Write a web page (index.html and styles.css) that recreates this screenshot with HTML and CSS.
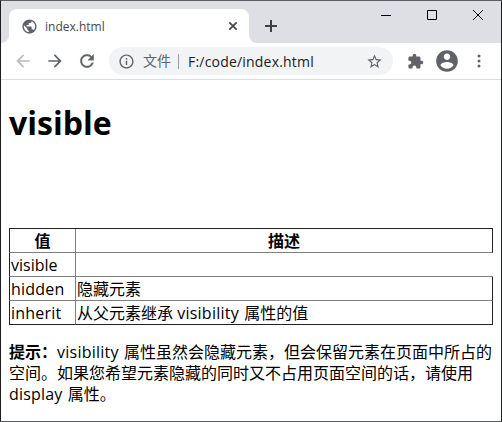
FILE: index.html
```html
<!DOCTYPE html>
<html lang="zh-CN">
<head>
<meta charset="utf-8">
<title>index.html</title>
<link rel="stylesheet" href="styles.css">
</head>
<body>
<div class="window">
  <header class="tabstrip">
    <div class="strip-left"></div>
    <div class="tab">
      <svg class="globe" viewBox="0 0 24 24"><path d="M12 2C6.480 2 2 6.480 2 12s4.480 10 10 10 10-4.480 10-10S17.520 2 12 2zm-1 17.930c-3.950-.490-7-3.850-7-7.930 0-.620.080-1.210.210-1.790L9 15v1c0 1.100.900 2 2 2v1.930zm6.900-2.540c-.260-.810-1-1.390-1.900-1.390h-1v-3c0-.550-.450-1-1-1H8v-2h2c.550 0 1-.450 1-1V7h2c1.100 0 2-.900 2-2v-.410c2.930 1.190 5 4.060 5 7.410 0 2.080-.800 3.970-2.100 5.390z"/></svg>
      <span class="tab-title">index.html</span>
      <svg class="tab-close" viewBox="0 0 10 10"><path d="M1.300 1.300l7.400 7.400M8.700 1.300L1.300 8.700"/></svg>
    </div>
    <div class="strip-right">
      <svg class="plus" viewBox="0 0 12 12"><path d="M6 0v12M0 6h12"/></svg>
      <svg class="control" viewBox="0 0 10 10"><path d="M0 5.500h10"/></svg>
      <svg class="control" viewBox="0 0 10 10"><path d="M.5.500h9v9h-9z"/></svg>
      <svg class="control" viewBox="0 0 10 10"><path d="M0 0l10 10M10 0L0 10"/></svg>
    </div>
  </header>
  <nav class="toolbar">
    <svg class="nav back" viewBox="0 0 24 24"><path d="M20 11H7.830l5.590-5.590L12 4l-8 8 8 8 1.410-1.410L7.830 13H20v-2z"/></svg>
    <svg class="nav" viewBox="0 0 24 24"><path d="M12 4l-1.410 1.410L16.170 11H4v2h12.170l-5.580 5.590L12 20l8-8z"/></svg>
    <svg class="nav reload" viewBox="0 0 24 24"><path d="M17.650 6.350C16.200 4.900 14.210 4 12 4c-4.420 0-7.990 3.580-7.990 8s3.570 8 7.990 8c3.730 0 6.840-2.550 7.730-6h-2.080c-.820 2.330-3.040 4-5.650 4-3.310 0-6-2.690-6-6s2.690-6 6-6c1.660 0 3.140.690 4.220 1.780L13 11h7V4l-2.350 2.350z"/></svg>
    <div class="omnibox">
      <svg class="info" viewBox="0 0 24 24"><path d="M11 7h2v2h-2zm0 4h2v6h-2zm1-9C6.480 2 2 6.480 2 12s4.480 10 10 10 10-4.480 10-10S17.520 2 12 2zm0 18c-4.410 0-8-3.590-8-8s3.590-8 8-8 8 3.590 8 8-3.590 8-8 8z"/></svg>
      <span class="scheme">文件</span>
      <span class="url">F:/code/index.html</span>
      <svg class="star" viewBox="0 0 24 24"><path d="M22 9.240l-7.190-.620L12 2 9.190 8.630 2 9.240l5.460 4.730L5.820 21 12 17.270 18.180 21l-1.630-7.030L22 9.240zM12 15.400l-3.760 2.270 1-4.280-3.320-2.880 4.380-.380L12 6.100l1.710 4.040 4.380.380-3.320 2.880 1 4.280L12 15.400z"/></svg>
    </div>
    <svg class="puzzle" viewBox="0 0 24 24"><path d="M20.500 11H19V7c0-1.100-.900-2-2-2h-4V3.500C13 2.120 11.880 1 10.500 1S8 2.120 8 3.500V5H4c-1.100 0-1.990.900-1.990 2v3.800H3.500c1.490 0 2.700 1.210 2.700 2.700s-1.210 2.700-2.700 2.700H2V20c0 1.100.900 2 2 2h3.800v-1.500c0-1.490 1.210-2.700 2.700-2.700s2.700 1.210 2.700 2.700V22H17c1.100 0 2-.900 2-2v-4h1.500c1.380 0 2.500-1.120 2.500-2.500S21.880 11 20.500 11z"/></svg>
    <svg class="account" viewBox="0 0 24 24"><path d="M12 2C6.480 2 2 6.480 2 12s4.480 10 10 10 10-4.480 10-10S17.520 2 12 2zm0 3c1.660 0 3 1.340 3 3s-1.340 3-3 3-3-1.340-3-3 1.340-3 3-3zm0 14.200c-2.500 0-4.710-1.280-6-3.220.030-1.990 4-3.080 6-3.080 1.990 0 5.970 1.090 6 3.080-1.290 1.940-3.500 3.220-6 3.220z"/></svg>
    <svg class="more" viewBox="0 0 4 14"><circle cx="2" cy="2" r="1.500"/><circle cx="2" cy="7" r="1.500"/><circle cx="2" cy="12" r="1.500"/></svg>
  </nav>
  <main class="page">
    <h1>visible</h1>
    <div class="grid">
      <div class="cell head">值</div><div class="cell head last">描述</div>
      <div class="cell">visible</div><div class="cell"></div>
      <div class="cell"><span class="term">hidden</span></div><div class="cell last">隐藏元素</div>
      <div class="cell bottom"><span class="term">inherit</span></div><div class="cell last bottom">从父元素继承 <span class="property">visibility</span> 属性的值</div>
    </div>
    <p class="note"><b>提示：</b><span class="property">visibility</span> 属性虽然会隐藏元素，但会保留元素在页面中所占的<br>空间。如果您希望元素隐藏的同时又不占用页面空间的话，请使用<br><span class="term">display</span> 属性。</p>
  </main>
</div>
</body>
</html>
```
FILE: styles.css
```css
* { box-sizing: border-box; }
body {
  margin: 0;
  font-family: "Open Sans", "Noto Sans CJK SC", sans-serif;
  font-size: 16px;
  color: #000;
}
svg { display: block; flex: none; fill: #5f6368; }
.window {
  width: 502px;
  height: 422px;
  border: 1px solid #5d5e62;
  border-left-color: #1c1d20;
  border-right-color: #1c1d20;
  background: #fff;
  overflow: hidden;
}
.tabstrip { display: flex; height: 42px; background: linear-gradient(#dedfe5 8px, #fff 8px); }
.strip-left { width: 8px; background: #dedfe5; border-bottom-right-radius: 8px; }
.tab {
  display: flex;
  align-items: center;
  width: 240px;
  height: 34px;
  margin-top: 8px;
  padding: 0 11px 0 12px;
  border-radius: 8px 8px 0 0;
  background: #fff;
  box-shadow: 0 -8px 0 #dedfe5;
}
.globe { width: 17px; height: 17px; }
.tab-title { margin: 1px 0 0 7px; font-size: 12px; line-height: 16px; color: #45474a; }
.tab-close { width: 10px; height: 10px; margin-left: auto; fill: none; stroke: #45494d; stroke-width: 1.7; }
.strip-right {
  display: flex;
  flex: 1;
  padding-left: 16px;
  background: #dedfe5;
  border-bottom-left-radius: 8px;
}
.plus { width: 12px; height: 12px; margin: 19px 104px 0 0; fill: none; stroke: #3c4043; stroke-width: 2; }
.control { width: 10px; height: 10px; margin: 9px 36px 0 0; fill: none; stroke: #000; stroke-width: 1; }
.control:last-child { margin-right: 0; }
.toolbar { display: flex; align-items: center; height: 37px; padding-left: 12px; border-bottom: 1px solid #dadce0; }
.nav { width: 20px; height: 20px; margin-right: 12px; }
.back { fill: #babcbe; }
.reload { stroke: #5f6368; stroke-width: .4; }
.omnibox {
  display: flex;
  align-items: center;
  width: 284px;
  height: 28px;
  margin-right: 14px;
  padding: 0 10px 0 9px;
  border-radius: 14px;
  background: #f1f3f4;
}
.info { width: 17px; height: 17px; }
.scheme { margin-left: 8px; font-size: 14px; line-height: 20px; color: #5f6368; }
.url { margin-left: 7px; padding-left: 9px; font-size: 14px; line-height: 15px; letter-spacing: .2px; border-left: 1px solid #9a9da1; color: #202124; white-space: nowrap; }
.star { width: 17px; height: 17px; margin-left: auto; }
.puzzle { width: 17px; height: 17px; margin-right: 10px; }
.account { width: 26px; height: 26px; margin-right: 17px; }
.more { width: 4px; height: 14px; }
.page { padding: 0 8px; }
h1 { height: 148px; margin: 0; padding-top: 21px; font-size: 32px; line-height: 43px; }
.grid {
  display: grid;
  grid-template-columns: 66px 418px;
  grid-auto-rows: 24px;
  height: 97px;
  border-top: 1px solid #222;
}
.cell { padding: 1px 0 0 1px; line-height: 23px; border-left: 1px solid #808080; border-bottom: 1px solid #808080; white-space: nowrap; }
.cell:nth-child(odd) { border-left-color: #222; }
.head { padding-left: 0; font-weight: bold; text-align: center; }
.last { border-right: 1px solid #222; }
.bottom { border-bottom-color: #222; }
.term { letter-spacing: .2px; margin-right: 1px; }
.property { letter-spacing: .25px; margin-right: 1px; }
.note { margin: 17px 0 0; line-height: 21px; white-space: nowrap; }
```
